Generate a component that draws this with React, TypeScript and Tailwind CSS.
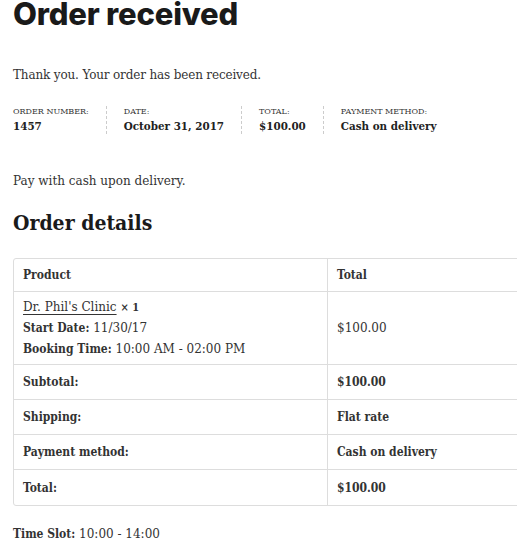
import React from "react";

const serif = { fontFamily: '"DejaVu Serif", serif' };

export default function App() {
  const rows = [
    ["Subtotal:", "$100.00"],
    ["Shipping:", "Flat rate"],
    ["Payment method:", "Cash on delivery"],
    ["Total:", "$100.00"],
  ];
  return (
    <div className="w-[517px] h-[545px] overflow-hidden bg-white text-[#333]" style={serif}>
      <div className="pl-[13px]">
        <h1
          className="text-[31px] leading-[28px] font-extrabold text-[#1a1a1a] tracking-[-0.2px]"
          style={{ fontFamily: 'Inter, sans-serif' }}
        >
          Order received
        </h1>
        <p className="mt-[38px] text-[12px] leading-[18px] tracking-[-0.15px]">Thank you. Your order has been received.</p>
        <ul className="mt-[22px] flex">
          <li className="pr-[17px] mr-[17px] border-r border-dashed border-[#ccc]">
            <div className="text-[8px] leading-[12px] uppercase">Order number:</div>
            <div className="text-[11.5px] leading-[16px] font-bold text-[#222] font-stretch-semi-condensed">1457</div>
          </li>
          <li className="pr-[17px] mr-[17px] border-r border-dashed border-[#ccc]">
            <div className="text-[8px] leading-[12px] uppercase">Date:</div>
            <div className="text-[11.5px] leading-[16px] font-bold text-[#222] font-stretch-semi-condensed">October 31, 2017</div>
          </li>
          <li className="pr-[17px] mr-[17px] border-r border-dashed border-[#ccc]">
            <div className="text-[8px] leading-[12px] uppercase">Total:</div>
            <div className="text-[11.5px] leading-[16px] font-bold text-[#222] font-stretch-semi-condensed">$100.00</div>
          </li>
          <li>
            <div className="text-[8px] leading-[12px] uppercase">Payment method:</div>
            <div className="text-[11.5px] leading-[16px] font-bold text-[#222] font-stretch-semi-condensed">Cash on delivery</div>
          </li>
        </ul>
        <p className="mt-[38px] text-[12px] leading-[18px]">Pay with cash upon delivery.</p>
        <h2 className="mt-[20px] text-[21px] leading-[26px] font-bold text-[#1a1a1a] font-stretch-semi-condensed">Order details</h2>
        <table className="mt-[22px] w-[628px] border-separate border-spacing-0 border border-[#ddd] rounded-[3px] text-[12px]">
          <thead>
            <tr>
              <th className="w-[314px] h-[33px] text-left font-bold font-stretch-semi-condensed px-[9px] border-r border-b border-[#ddd]">Product</th>
              <th className="text-left font-bold font-stretch-semi-condensed px-[9px] border-b border-[#ddd]">Total</th>
            </tr>
          </thead>
          <tbody>
            <tr>
              <td className="px-[9px] pt-[5px] pb-[4px] leading-[21px] border-r border-b border-[#ddd]">
                <div>
                  <span className="underline underline-offset-[3px]">Dr. Phil's Clinic</span>{" "}
                  <b className="text-[11px] font-stretch-semi-condensed">× 1</b>
                </div>
                <div>
                  <b className="font-stretch-semi-condensed">Start Date:</b> 11/30/17
                </div>
                <div>
                  <b className="font-stretch-semi-condensed">Booking Time:</b> 10:00 AM - 02:00 PM
                </div>
              </td>
              <td className="px-[9px] border-b border-[#ddd]">$100.00</td>
            </tr>
            {rows.map(([a, b], i) => (
              <tr key={a}>
                <th
                  className={`h-[35px] text-left font-bold font-stretch-semi-condensed px-[9px] border-r border-[#ddd] ${i < 3 ? "border-b" : ""}`}
                >
                  {a}
                </th>
                <td className={`px-[9px] font-bold font-stretch-semi-condensed ${i < 3 ? "border-b border-[#ddd]" : ""}`}>{b}</td>
              </tr>
            ))}
          </tbody>
        </table>
        <p className="mt-[19px] text-[12px] leading-[18px]">
          <b className="font-stretch-semi-condensed">Time Slot:</b> 10:00 - 14:00
        </p>
      </div>
    </div>
  );
}
